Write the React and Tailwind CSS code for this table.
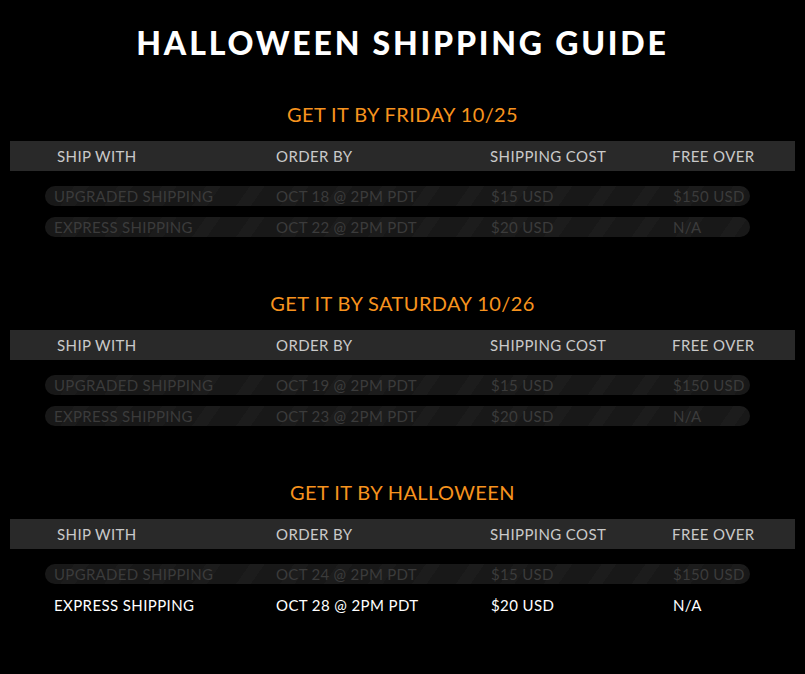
import React from "react";

const sections = [
    {
        title: "GET IT BY FRIDAY 10/25",
        rows: [
            { ship: "UPGRADED SHIPPING", order: "OCT 18 @ 2PM PDT", cost: "$15 USD", free: "$150 USD" },
            { ship: "EXPRESS SHIPPING", order: "OCT 22 @ 2PM PDT", cost: "$20 USD", free: "N/A" },
        ],
    },
    {
        title: "GET IT BY SATURDAY 10/26",
        rows: [
            { ship: "UPGRADED SHIPPING", order: "OCT 19 @ 2PM PDT", cost: "$15 USD", free: "$150 USD" },
            { ship: "EXPRESS SHIPPING", order: "OCT 23 @ 2PM PDT", cost: "$20 USD", free: "N/A" },
        ],
    },
    {
        title: "GET IT BY HALLOWEEN",
        rows: [
            { ship: "UPGRADED SHIPPING", order: "OCT 24 @ 2PM PDT", cost: "$15 USD", free: "$150 USD" },
            { ship: "EXPRESS SHIPPING", order: "OCT 28 @ 2PM PDT", cost: "$20 USD", free: "N/A", active: true },
        ],
    },
];

function Row({ row }) {
    if (row.active) {
        return (
            <div className="w-[705px] h-[20px] ml-[35px] pl-[9px] grid grid-cols-[222px_215px_182px_1fr] items-center text-[15px] leading-[20px] text-white tracking-[0.4px]">
                <span>{row.ship}</span>
                <span>{row.order}</span>
                <span>{row.cost}</span>
                <span>{row.free}</span>
            </div>
        );
    }
    return (
        <div className="w-[705px] h-[20px] ml-[35px] pl-[9px] grid grid-cols-[222px_215px_182px_1fr] items-center rounded-full text-[15px] leading-[20px] text-[#3b3b3b] tracking-[0.3px] bg-[repeating-linear-gradient(125deg,#181818_0px,#181818_24px,#1c1c1c_24px,#1c1c1c_36px)]">
            <span>{row.ship}</span>
            <span>{row.order}</span>
            <span>{row.cost}</span>
            <span>{row.free}</span>
        </div>
    );
}

function Section({ section, first }) {
    return (
        <div className={first ? "mt-[39px]" : "mt-[54px]"}>
            <h2 className="text-center text-[20px] leading-[24px] text-[#f7931e] tracking-[0.4px]">{section.title}</h2>
            <div className="mt-[15px] h-[30px] bg-[#292929] pl-[47px] grid grid-cols-[219px_214px_182px_1fr] items-center text-[15px] text-[#c9c9c9] tracking-[0.4px]">
                <span>SHIP WITH</span>
                <span>ORDER BY</span>
                <span>SHIPPING COST</span>
                <span>FREE OVER</span>
            </div>
            <div className="mt-[15px] flex flex-col gap-[11px]">
                {section.rows.map((row, i) => (
                    <Row key={i} row={row} />
                ))}
            </div>
        </div>
    );
}

export default function App() {
    return (
        <div className="w-[805px] h-[674px] bg-black overflow-hidden px-[10px] pt-[23px] font-['Lato',sans-serif]">
            <h1 className="text-center text-white font-black text-[32px] leading-[40px] tracking-[2.8px]">
                HALLOWEEN SHIPPING GUIDE
            </h1>
            {sections.map((s, i) => (
                <Section key={i} section={s} first={i === 0} />
            ))}
        </div>
    );
}
